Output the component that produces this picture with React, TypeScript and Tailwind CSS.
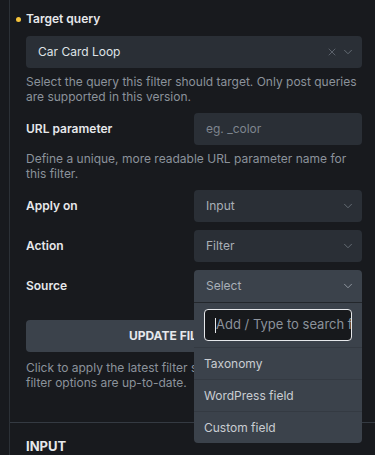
import React from 'react';
import { ChevronDown, X } from 'lucide-react';

const font = { fontFamily: 'Inter, "Noto Sans", sans-serif' };

function Help({ children, className = 'mt-[6px]' }: { children: React.ReactNode; className?: string }) {
  return <p className={`${className} text-[12px] leading-[15px] text-[#8b929b]`}>{children}</p>;
}

function Field({ value }: { value: string }) {
  return (
    <div className="flex h-8 items-center justify-between rounded-[4px] bg-[#2a2f36] pl-3 pr-[7px]">
      <span className="text-[12px] text-[#a9afb7]">{value}</span>
      <ChevronDown size={14} strokeWidth={1.5} className="text-[#6c737c]" />
    </div>
  );
}

function Row({ label, children }: { label: string; children: React.ReactNode }) {
  return (
    <div className="grid grid-cols-[168px_168px] items-center">
      <span className="text-[12px] font-semibold text-[#e6e8eb]">{label}</span>
      {children}
    </div>
  );
}

export default function App() {
  return (
    <div className="h-[455px] w-[375px] overflow-hidden bg-[#181a1e] pl-[9px]" style={font}>
      <div className="h-full border-l border-[#2c3137]">
        <div className="pl-4 pr-[13px] pt-[11px]">
          <div className="relative flex h-4 items-center">
            <span className="absolute -left-[10px] h-[5px] w-[5px] rounded-full bg-[#f5c33b]" />
            <span className="text-[12px] font-semibold text-[#e6e8eb]">Target query</span>
          </div>
          <div className="mt-[9px] flex h-8 items-center justify-between rounded-[4px] bg-[#2a2f36] pl-3 pr-[7px]">
            <span className="text-[12px] text-[#dfe2e6]">Car Card Loop</span>
            <div className="flex items-center gap-[3px] text-[#6c737c]">
              <X size={12} strokeWidth={1.5} />
              <ChevronDown size={14} strokeWidth={1.5} />
            </div>
          </div>
          <Help>Select the query this filter should target. Only post queries are supported in this version.</Help>

          <div className="mt-[9px]">
            <Row label="URL parameter">
              <div className="flex h-8 items-center rounded-[4px] bg-[#2a2f36] pl-3">
                <span className="text-[12px] text-[#7e858e]">eg. _color</span>
              </div>
            </Row>
          </div>
          <Help>Define a unique, more readable URL parameter name for this filter.</Help>

          <div className="mt-[9px] flex flex-col gap-2">
            <Row label="Apply on">
              <Field value="Input" />
            </Row>
            <Row label="Action">
              <Field value="Filter" />
            </Row>
            <Row label="Source">
              <div className="relative">
                <div className="flex h-8 items-center justify-between rounded-t-[4px] bg-[#3b424b] pl-3 pr-[7px]">
                  <span className="text-[12px] text-[#a9afb7]">Select</span>
                  <ChevronDown size={14} strokeWidth={1.5} className="text-[#9aa1aa]" />
                </div>
                <div className="absolute left-0 right-0 top-full z-10 rounded-b-[4px] border-t border-[#23272c] bg-[#3b424b]">
                  <div className="px-[10px] pb-[6px] pt-[6px]">
                    <div className="flex h-8 items-center overflow-hidden rounded-[4px] border border-[#e6e8eb] bg-[#17191c] pl-[10px]">
                      <span className="h-[15px] w-px shrink-0 bg-[#e6e8eb]" />
                      <span className="whitespace-nowrap text-[13px] text-[#8b929b]">Add / Type to search filter source</span>
                    </div>
                  </div>
                  {['Taxonomy', 'WordPress field', 'Custom field'].map((item) => (
                    <div key={item} className="flex h-8 items-center border-t border-[#343a42] px-[10px] text-[12px] text-[#c9cdd2]">
                      {item}
                    </div>
                  ))}
                </div>
              </div>
            </Row>
          </div>

          <button className="mt-[18px] flex h-8 w-full items-center justify-center rounded-[4px] bg-[#3b424b] text-[12px] font-bold uppercase text-[#e6e8eb]">
            Update filter index
          </button>
          <Help className="mt-[8px]">
            Click to apply the latest filter settings to make sure all
            <br />
            filter options are up-to-date.
          </Help>
        </div>

        <div className="mt-[32px] border-t border-[#343a42] pl-4 pt-[10px]">
          <span className="text-[13px] font-bold text-[#e6e8eb]">INPUT</span>
        </div>
      </div>
    </div>
  );
}
